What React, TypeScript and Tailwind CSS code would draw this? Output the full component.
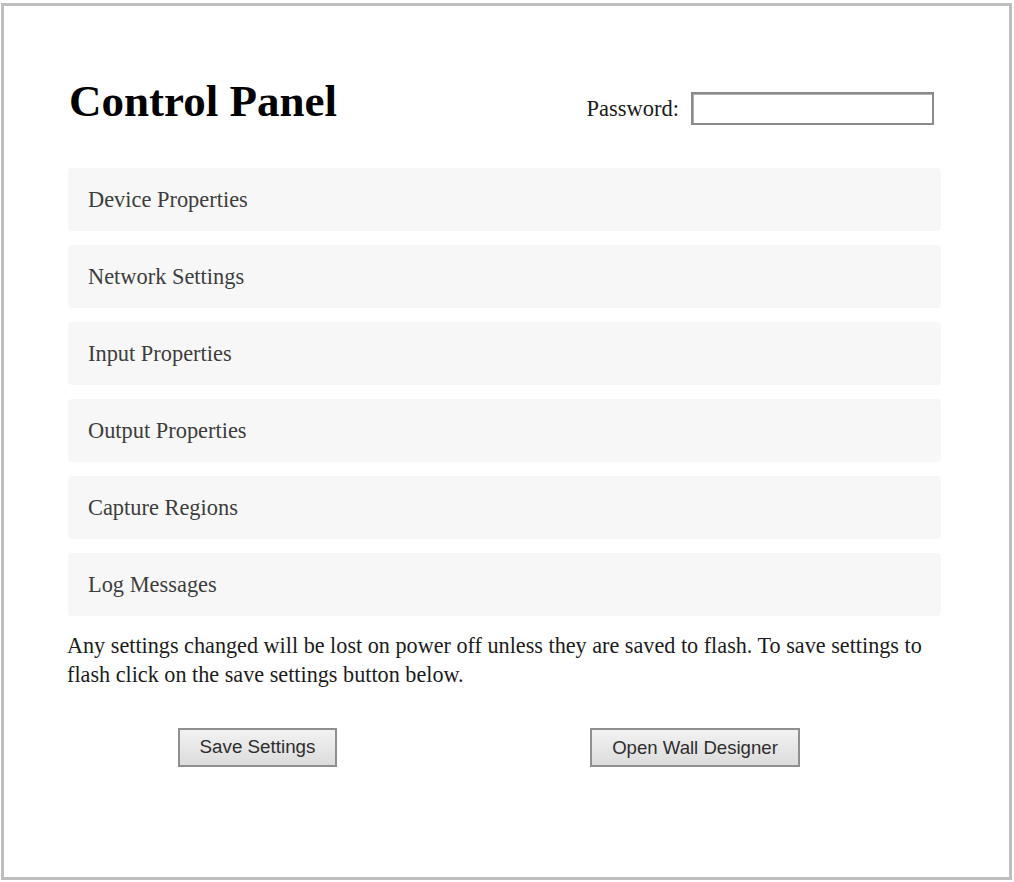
const sections = [
  'Device Properties',
  'Network Settings',
  'Input Properties',
  'Output Properties',
  'Capture Regions',
  'Log Messages',
];

export default function App() {
  return (
    <div className="w-[1014px] h-[882px] bg-white pt-[3px] pl-[1px]">
      <div className="w-[1011px] h-[877px] border-[3px] border-[#bebebe] pt-[70px] pl-[63px] font-['Liberation_Serif',serif]">
        <div className="w-[876px]">
          {/* Header */}
          <div className="flex justify-between items-start h-[50px] pr-[9px]">
            <h1 className="text-[45px] leading-[50px] font-bold text-black pl-[2px]">Control Panel</h1>
            <div className="flex items-center gap-[12px] mt-[16px]">
              <label className="text-[22.5px] leading-[26px] text-[#1a1a1a]">Password:</label>
              <input
                type="password"
                className="w-[243px] h-[33px] border-2 border-[#8a8a8a] bg-white outline-none shadow-[inset_1px_1px_0_#b0b0b0]"
              />
            </div>
          </div>

          {/* Sections */}
          <div className="flex flex-col gap-[14px] mt-[42px] pl-[1px] pr-[2px]">
            {sections.map((name) => (
              <div
                key={name}
                className="h-[63px] rounded-[4px] bg-[#f7f7f7] flex items-center pl-[20px] text-[22.4px] text-[#3d3d3d]"
              >
                {name}
              </div>
            ))}
          </div>

          <p className="mt-[15px] text-[22.2px] leading-[29px] text-[#1c1c1c]">
            Any settings changed will be lost on power off unless they are saved to flash. To save settings to flash click on the save settings button below.
          </p>

          {/* Buttons */}
          <div className="flex mt-[39px] pl-[111px] gap-[253px]">
            <button className="w-[159px] h-[39px] border-2 border-[#8f8f8f] bg-gradient-to-b from-[#f2f2f2] to-[#dcdcdc] text-[18.8px] text-[#2e2e2e] font-['Liberation_Sans',sans-serif]">
              Save Settings
            </button>
            <button className="w-[210px] h-[39px] border-2 border-[#8f8f8f] bg-gradient-to-b from-[#f2f2f2] to-[#dcdcdc] text-[18.6px] text-[#2e2e2e] font-['Liberation_Sans',sans-serif]">
              Open Wall Designer
            </button>
          </div>
        </div>
      </div>
    </div>
  );
}
